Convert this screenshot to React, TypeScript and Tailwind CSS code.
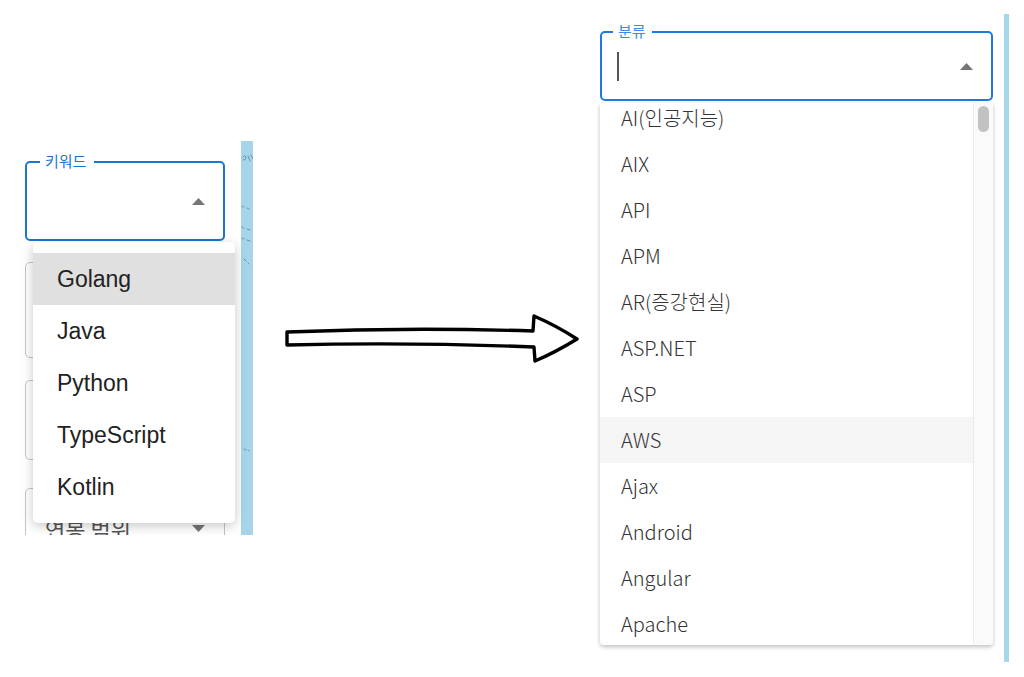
const keywords = ["Golang", "Java", "Python", "TypeScript", "Kotlin"];

const categories = [
  "AI(인공지능)",
  "AIX",
  "API",
  "APM",
  "AR(증강현실)",
  "ASP.NET",
  "ASP",
  "AWS",
  "Ajax",
  "Android",
  "Angular",
  "Apache",
];

const kr = { fontFamily: '"Noto Sans CJK KR", "Noto Sans", sans-serif' };

const Caret = ({ down = false }: { down?: boolean }) => (
  <svg width="13" height="7" viewBox="0 0 13 7" className="shrink-0">
    <path d={down ? "M0 0 6.5 7 13 0Z" : "M0 7 6.5 0 13 7Z"} fill="#757575" />
  </svg>
);

function LeftShot() {
  return (
    <div className="mt-[141px] w-[253px] h-[394px] shrink-0 flex overflow-hidden">
      <div className="relative w-[241px] h-full bg-white">
        <div className="pt-[20px] pl-[25px] flex flex-col">
          <div className="relative w-[200px] h-[80px] rounded-[5px] border-2 border-[#1976d2] flex items-center justify-end pr-[18px]">
            <span
              className="absolute left-[13px] top-[-12px] h-[20px] leading-[20px] pl-[5px] pr-[8px] bg-white text-[15px] text-[#1976d2]"
              style={kr}
            >
              키워드
            </span>
            <Caret />
          </div>
          <div className="mt-[21px] w-[200px] h-[96px] rounded-[5px] border border-[#c4c4c4]" />
          <div className="mt-[22px] w-[200px] h-[80px] rounded-[5px] border border-[#c4c4c4]" />
          <div className="mt-[28px] w-[200px] h-[80px] rounded-[5px] border border-[#c4c4c4] flex items-center justify-between pl-[19px] pr-[19px]">
            <span className="text-[22px] text-[#555]" style={kr}>
              연봉 범위
            </span>
            <Caret down />
          </div>
        </div>

        <div className="absolute left-[33px] top-[101px] w-[202px] h-[281px] bg-white rounded-[5px] shadow-[0_3px_12px_rgba(0,0,0,0.22)] pt-[11px]">
          {keywords.map((k, i) => (
            <div
              key={k}
              className={`h-[52px] flex items-center pl-[24px] text-[23px] text-[#222] font-['Liberation_Sans',Arial,sans-serif] ${
                i === 0 ? "bg-[#e0e0e0]" : ""
              }`}
            >
              {k}
            </div>
          ))}
        </div>
      </div>
      <div className="w-[12px] h-full bg-[#a6d5ea]">
        <svg width="12" height="394" viewBox="0 0 12 394">
          <g stroke="#5d7f96" strokeWidth="0.8" fill="none" strokeLinecap="round">
            <path d="M2 16 Q4 13 5 17 Q4 20 2 19 M7 15 L9 20 M10 14 L12 18" />
            <path d="M1 65 L3 66 M6 67 L8 68" />
            <path d="M1 86 L3 87 M6 88 L9 89" />
            <path d="M1 97 L3 98 M6 99 L9 100" />
            <path d="M3 118 L5 120 M7 122 L8 123" />
            <path d="M3 308 L5 309 M7 309 L8 310" />
          </g>
        </svg>
      </div>
    </div>
  );
}

function Arrow() {
  return (
    <svg
      width="298"
      height="54"
      viewBox="0 0 298 54"
      className="mt-[312px] ml-[31px] shrink-0"
    >
      <path
        d="M3 20 Q126 15 249 19 L250 4 Q273 14 293 27 Q272 40 251 49 L250 35 Q126 30 3 33 Z"
        fill="white"
        stroke="#000"
        strokeWidth="3.4"
        strokeLinejoin="round"
      />
    </svg>
  );
}

function RightShot() {
  return (
    <div className="ml-[16px] mt-[14px] w-[411px] h-[648px] shrink-0 flex">
      <div className="w-[406px] h-full flex flex-col pt-[17px] pl-[2px]">
        <div className="relative w-[393px] h-[70px] rounded-[5px] border-2 border-[#1f7ae0] flex items-center justify-between pl-[15px] pr-[18px]">
          <span
            className="absolute left-[11px] top-[-12px] h-[20px] leading-[20px] pl-[5px] pr-[6px] bg-white text-[15px] text-[#3d89e3]"
            style={kr}
          >
            분류
          </span>
          <div className="w-[2px] h-[29px] bg-[#555]" />
          <Caret />
        </div>
        <div className="mt-[2px] w-[393px] h-[542px] flex bg-white rounded-b-[4px] shadow-[0_2px_4px_rgba(0,0,0,0.25)] overflow-hidden">
          <div className="w-[373px] h-full overflow-hidden">
            <div className="-mt-[8px]">
              {categories.map((c, i) => (
                <div
                  key={c}
                  className={`h-[46px] flex items-center pl-[21px] text-[20px] font-light text-[#333] ${
                    i === 7 ? "bg-[#f5f5f5]" : ""
                  }`}
                  style={kr}
                >
                  {c}
                </div>
              ))}
            </div>
          </div>
          <div className="w-[20px] h-full bg-[#fafafa] border-l border-[#ececec] pt-[3px] pl-[4px]">
            <div className="w-[11px] h-[26px] rounded-full bg-[#c2c2c2]" />
          </div>
        </div>
      </div>
      <div className="w-[5px] h-full bg-[#a6d8ec]" />
    </div>
  );
}

export default function App() {
  return (
    <div className="w-[1024px] h-[677px] bg-white flex items-start overflow-hidden">
      <LeftShot />
      <Arrow />
      <RightShot />
    </div>
  );
}
